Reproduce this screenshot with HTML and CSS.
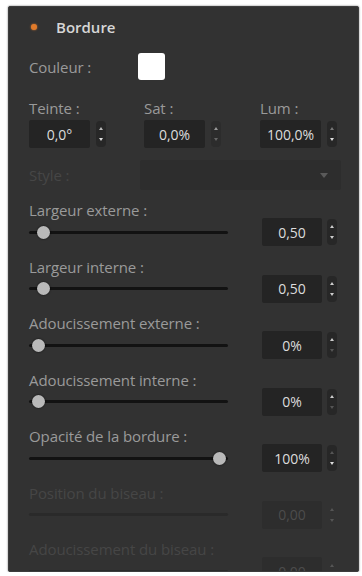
FILE: index.html
```html
<!DOCTYPE html>
<html lang="fr">
<head>
<meta charset="utf-8">
<title>Bordure</title>
<link rel="stylesheet" href="styles.css">
</head>
<body>
<div class="panel">
  <div class="header">
    <span class="dot"></span>
    <span class="title">Bordure</span>
  </div>

  <div class="color-row">
    <span class="label">Couleur :</span>
    <span class="swatch"></span>
  </div>

  <div class="hsl">
    <div class="hsl-col">
      <span class="label">Teinte :</span>
      <div class="field">
        <span class="box">0,0°</span>
        <svg class="spin" viewBox="0 0 10 26"><rect x="0" y="0" width="10" height="26" rx="4" fill="#272727"/><path d="M3 9 L5 6 L7 9 Z" fill="#bbb"/><path d="M3 17 L5 20 L7 17 Z" fill="#ddd"/></svg>
      </div>
    </div>
    <div class="hsl-col">
      <span class="label">Sat :</span>
      <div class="field">
        <span class="box">0,0%</span>
        <svg class="spin" viewBox="0 0 10 26"><rect x="0" y="0" width="10" height="26" rx="4" fill="#2c2c2c"/><path d="M3 9 L5 6 L7 9 Z" fill="#999"/><path d="M3 17 L5 20 L7 17 Z" fill="#666"/></svg>
      </div>
    </div>
    <div class="hsl-col">
      <span class="label">Lum :</span>
      <div class="field">
        <span class="box">100,0%</span>
        <svg class="spin" viewBox="0 0 10 26"><rect x="0" y="0" width="10" height="26" rx="4" fill="#272727"/><path d="M3 9 L5 6 L7 9 Z" fill="#777"/><path d="M3 17 L5 20 L7 17 Z" fill="#ddd"/></svg>
      </div>
    </div>
  </div>

  <div class="style-row">
    <span class="label disabled">Style :</span>
    <div class="dropdown">
      <svg class="arrow" viewBox="0 0 8 5"><path d="M0 0 L8 0 L4 5 Z" fill="#5a5a5a"/></svg>
    </div>
  </div>

  <div class="group">
    <span class="label">Largeur externe :</span>
    <div class="slider-row">
      <div class="track"><span class="thumb" style="left:8px"></span></div>
      <span class="box">0,50</span>
      <svg class="spin" viewBox="0 0 10 26"><rect x="0" y="0" width="10" height="26" rx="4" fill="#272727"/><path d="M3 9 L5 6 L7 9 Z" fill="#ccc"/><path d="M3 17 L5 20 L7 17 Z" fill="#ccc"/></svg>
    </div>
  </div>

  <div class="group">
    <span class="label">Largeur interne :</span>
    <div class="slider-row">
      <div class="track"><span class="thumb" style="left:8px"></span></div>
      <span class="box">0,50</span>
      <svg class="spin" viewBox="0 0 10 26"><rect x="0" y="0" width="10" height="26" rx="4" fill="#272727"/><path d="M3 9 L5 6 L7 9 Z" fill="#ccc"/><path d="M3 17 L5 20 L7 17 Z" fill="#ccc"/></svg>
    </div>
  </div>

  <div class="group">
    <span class="label">Adoucissement externe :</span>
    <div class="slider-row">
      <div class="track"><span class="thumb" style="left:3px"></span></div>
      <span class="box">0%</span>
      <svg class="spin" viewBox="0 0 10 26"><rect x="0" y="0" width="10" height="26" rx="4" fill="#272727"/><path d="M3 9 L5 6 L7 9 Z" fill="#ccc"/><path d="M3 17 L5 20 L7 17 Z" fill="#555"/></svg>
    </div>
  </div>

  <div class="group">
    <span class="label">Adoucissement interne :</span>
    <div class="slider-row">
      <div class="track"><span class="thumb" style="left:3px"></span></div>
      <span class="box">0%</span>
      <svg class="spin" viewBox="0 0 10 26"><rect x="0" y="0" width="10" height="26" rx="4" fill="#272727"/><path d="M3 9 L5 6 L7 9 Z" fill="#ccc"/><path d="M3 17 L5 20 L7 17 Z" fill="#555"/></svg>
    </div>
  </div>

  <div class="group">
    <span class="label">Opacité de la bordure :</span>
    <div class="slider-row">
      <div class="track"><span class="thumb" style="left:184px"></span></div>
      <span class="box">100%</span>
      <svg class="spin" viewBox="0 0 10 26"><rect x="0" y="0" width="10" height="26" rx="4" fill="#272727"/><path d="M3 9 L5 6 L7 9 Z" fill="#555"/><path d="M3 17 L5 20 L7 17 Z" fill="#ddd"/></svg>
    </div>
  </div>

  <div class="group off">
    <span class="label disabled">Position du biseau :</span>
    <div class="slider-row">
      <div class="track"></div>
      <span class="box">0,00</span>
      <svg class="spin" viewBox="0 0 10 26"><path d="M3 9 L5 6 L7 9 Z" fill="#555"/><path d="M3 17 L5 20 L7 17 Z" fill="#555"/></svg>
    </div>
  </div>

  <div class="group off">
    <span class="label disabled">Adoucissement du biseau :</span>
    <div class="slider-row">
      <div class="track"></div>
      <span class="box">0,00</span>
      <svg class="spin" viewBox="0 0 10 26"><path d="M3 9 L5 6 L7 9 Z" fill="#555"/><path d="M3 17 L5 20 L7 17 Z" fill="#555"/></svg>
    </div>
  </div>
</div>
</body>
</html>
```

FILE: styles.css
```css
html, body {
  margin: 0;
  padding: 0;
  background: #ffffff;
}

body {
  font-family: "Open Sans", "Liberation Sans", sans-serif;
}

.panel {
  margin: 6px 3px 0 8px;
  height: 566px;
  box-sizing: border-box;
  background: #323232;
  border: 1px solid #3d3d3d;
  border-radius: 2px;
  box-shadow: 0 0 2px rgba(0, 0, 0, 0.6);
  overflow: hidden;
  padding: 0 0 0 20px;
}

.header {
  display: flex;
  align-items: center;
  height: 20px;
  margin-top: 10px;
}

.dot {
  width: 6px;
  height: 6px;
  border-radius: 50%;
  background: #e07a2a;
  box-shadow: 0 0 2px rgba(255, 140, 50, 0.8);
  margin-left: 2px;
}

.title {
  margin-left: 19px;
  font-size: 15px;
  font-weight: 600;
  color: #d6d6d6;
}

.label {
  font-size: 15px;
  line-height: 16px;
  color: #9a9a9a;
  white-space: nowrap;
  letter-spacing: -0.1px;
}

.label.disabled {
  color: #464646;
}

.color-row {
  display: flex;
  align-items: center;
  margin-top: 16px;
  height: 27px;
}

.color-row .label {
  width: 109px;
}

.swatch {
  width: 27px;
  height: 27px;
  border-radius: 3px;
  background: #ffffff;
}

.hsl {
  display: flex;
  margin-top: 20px;
}

.hsl-col {
  display: flex;
  flex-direction: column;
  gap: 4px;
  width: 116px;
  flex: none;
}

.hsl-col:first-child {
  width: 115px;
}

.field {
  display: flex;
  align-items: center;
  gap: 6px;
}

.box {
  display: flex;
  align-items: center;
  justify-content: center;
  width: 61px;
  height: 28px;
  background: #242424;
  border-radius: 2px;
  font-size: 14px;
  color: #dcdcdc;
  flex: none;
}

.spin {
  width: 10px;
  height: 26px;
  flex: none;
}

.style-row {
  display: flex;
  align-items: center;
  margin-top: 12px;
  height: 30px;
}

.style-row .label {
  width: 111px;
}

.dropdown {
  width: 201px;
  height: 30px;
  background: #2d2d2d;
  border-radius: 2px;
  display: flex;
  align-items: center;
  justify-content: flex-end;
}

.arrow {
  width: 8px;
  height: 5px;
  margin-right: 13px;
}

.group {
  display: flex;
  flex-direction: column;
  height: 56.5px;
}

.style-row + .group {
  margin-top: 12px;
}

.slider-row {
  display: flex;
  align-items: center;
  height: 28px;
}

.track {
  position: relative;
  width: 199px;
  height: 3px;
  background: #121212;
  border-radius: 2px;
  flex: none;
}

.thumb {
  position: absolute;
  top: -5px;
  width: 13px;
  height: 13px;
  border-radius: 50%;
  background: #b9b9b9;
  box-shadow: 0 0 2px rgba(0, 0, 0, 0.8);
}

.slider-row .box {
  width: 60px;
  margin-left: 34px;
}

.slider-row .spin {
  margin-left: 5px;
}

.group.off .track {
  background: #2a2a2a;
}

.group.off .box {
  background: #2d2d2d;
  color: #4c4c4c;
}
```
